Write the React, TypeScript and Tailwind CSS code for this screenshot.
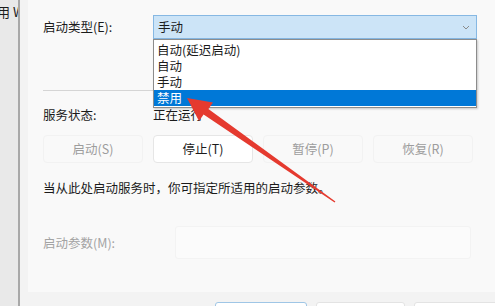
import React from "react";

const font = { fontFamily: '"Noto Sans CJK SC", "Noto Sans", sans-serif' };

function Btn({ label, active }: { label: string; active?: boolean }) {
  return (
    <div
      className={
        active
          ? "w-[100px] h-[28px] flex items-center justify-center rounded-[4px] bg-white border border-[#e6e6e6] text-[#1b1b1b]"
          : "w-[100px] h-[28px] flex items-center justify-center rounded-[4px] bg-[#f9f9f9] border border-[#f2f2f2] text-[#9d9d9d]"
      }
    >
      {label}
    </div>
  );
}

export default function App() {
  const options = ["自动(延迟启动)", "自动", "手动", "禁用"];

  return (
    <div
      className="relative w-[495px] h-[306px] flex overflow-hidden bg-[#f3f3f3] text-[12.5px] leading-[18px] text-[#1b1b1b]"
      style={font}
    >
      {/* window behind */}
      <div className="w-[20px] shrink-0 bg-[#e9e9e9] border-r-2 border-[#a8a8a8] overflow-hidden">
        <div className="whitespace-nowrap ml-[-3px] mt-[3px] text-[13px]">用 W</div>
      </div>

      <div className="flex-1 flex flex-col">
        {/* group panel */}
        <div className="ml-[8px] h-[292px] shrink-0 bg-[#f9f9f9] pl-[15px] pt-[15px] relative">
          <div className="flex items-center h-[24px]">
            <div className="w-[110px]">启动类型(E):</div>
            <div className="w-[324px] h-[24px] bg-[#cce4f7] border border-[#86b8e3] flex items-center justify-between pl-[4px] pr-[6px]">
              <span>手动</span>
              <svg width="8" height="5" viewBox="0 0 8 5" className="mt-[1px]">
                <path d="M1 1l3 3 3-3" fill="none" stroke="#8a8a8a" strokeWidth="1" />
              </svg>
            </div>
          </div>

          <div className="mt-[51px] w-[434px] h-px bg-[#d5d5d5]" />

          <div className="flex items-center mt-[15px]">
            <div className="w-[110px]">服务状态:</div>
            <div>正在运行</div>
          </div>

          <div className="flex gap-[10px] mt-[11px]">
            <Btn label="启动(S)" />
            <Btn label="停止(T)" active />
            <Btn label="暂停(P)" />
            <Btn label="恢复(R)" />
          </div>

          <div className="mt-[16px]">当从此处启动服务时，你可指定所适用的启动参数。</div>

          <div className="flex items-center mt-[29px]">
            <div className="w-[132px] text-[#a3a3a3]">启动参数(M):</div>
            <div className="w-[296px] h-[33px] bg-[#fbfbfb] border border-[#f3f3f3] rounded-[3px]" />
          </div>

          {/* open dropdown list */}
          <div className="absolute left-[125px] top-[39px] w-[324px] bg-white border border-[#8c8c8c] pt-[2px] pb-[1px] shadow-[1px_1px_2px_rgba(0,0,0,0.2)]">
            {options.map((o) => (
              <div
                key={o}
                className={
                  o === "禁用"
                    ? "h-[16px] leading-[16px] pl-[3px] bg-[#0078d7] text-white"
                    : "h-[16px] leading-[16px] pl-[3px]"
                }
              >
                {o}
              </div>
            ))}
          </div>
        </div>

        {/* footer buttons */}
        <div className="flex gap-[9px] pl-[195px] pt-[10px]">
          <div className="w-[92px] h-[24px] bg-white border border-[#9fc6e6] rounded-[3px]" />
          <div className="w-[89px] h-[24px] bg-white border border-[#e3e3e3] rounded-[3px]" />
          <div className="w-[89px] h-[24px] bg-white border border-[#e3e3e3] rounded-[3px]" />
        </div>
      </div>

      {/* red annotation arrow */}
      <svg className="absolute inset-0 pointer-events-none" width="495" height="306" viewBox="0 0 495 306">
        <polygon
          points="187,98 213,102.5 208.4,109 335.4,201.6 334.6,202.4 203.6,114.6 199,121"
          fill="#e53a2f"
        />
      </svg>
    </div>
  );
}
